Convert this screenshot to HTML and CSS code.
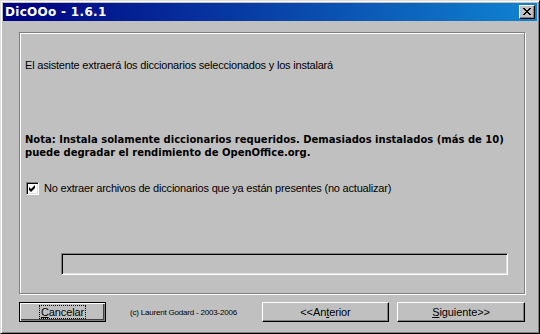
FILE: index.html
```html
<!DOCTYPE html>
<html>
<head>
<meta charset="utf-8">
<link rel="stylesheet" href="styles.css">
</head>
<body>
<div class="window">
  <div class="titlebar">
    <span class="title">DicOOo - 1.6.1</span>
    <span class="close"><svg width="8" height="7" viewBox="0 0 8 7"><path d="M0 0h2v1h1v1h2v-1h1v-1h2v1h-1v1h-1v1h-1v1h1v1h1v1h1v1h-2v-1h-1v-1h-2v1h-1v1h-2v-1h1v-1h1v-1h1v-1h-1v-1h-1v-1h-1z" fill="#000"/></svg></span>
  </div>
  <div class="content">
    <div class="frame">
      <p class="intro">El asistente extraerá los diccionarios seleccionados y los instalará</p>
      <p class="note">Nota: Instala solamente diccionarios requeridos. Demasiados instalados (más de 10)<br>puede degradar el rendimiento de OpenOffice.org.</p>
      <div class="check">
        <span class="box"><svg width="7" height="7" viewBox="0 0 7 7"><path d="M6 0v3l-4 4-2-2v-3l2 2z" fill="#000"/></svg></span>
        <span class="check-label">No extraer archivos de diccionarios que ya están presentes (no actualizar)</span>
      </div>
      <div class="progress"></div>
    </div>
    <div class="buttons">
      <span class="btn btn-default"><span class="focus"><u>C</u>ancelar</span></span>
      <span class="copy">(c) Laurent Godard - 2003-2006</span>
      <span class="btn btn-wide">&lt;&lt;An<u>t</u>erior</span>
      <span class="btn btn-wide"><u>S</u>iguiente&gt;&gt;</span>
    </div>
  </div>
</div>
</body>
</html>
```

FILE: styles.css
```css
* { box-sizing: border-box; }
html, body { margin: 0; padding: 0; background: #c0c0c0; }
body { font-family: "Liberation Sans", Arial, sans-serif; font-size: 11px; color: #000; }

.window {
  width: 540px;
  height: 334px;
  background: #c0c0c0;
  border-top: 1px solid #dfdfdf;
  border-left: 1px solid #dfdfdf;
  border-right: 1px solid #000;
  border-bottom: 1px solid #000;
  box-shadow: inset 1px 1px #fff, inset -1px -1px #808080;
  padding: 2px;
  display: flex;
  flex-direction: column;
}

.titlebar {
  height: 18px;
  background: linear-gradient(to right, #000080, #1084d0);
  display: flex;
  align-items: center;
  justify-content: space-between;
  padding: 0 2px 0 2px;
}
.title {
  color: #fff;
  font-family: "DejaVu Sans", Verdana, sans-serif;
  font-weight: bold;
  font-size: 12px;
  letter-spacing: 0.3px;
}
.close {
  width: 16px;
  height: 14px;
  background: #c0c0c0;
  border-top: 1px solid #fff;
  border-left: 1px solid #fff;
  border-right: 1px solid #000;
  border-bottom: 1px solid #000;
  box-shadow: inset -1px -1px #808080;
  display: flex;
  align-items: center;
  justify-content: center;
  padding-bottom: 1px;
}

.content {
  flex: 1;
  padding: 11px 12px 0 16px;
  display: flex;
  flex-direction: column;
}

.frame {
  height: 262px;
  border: 1px solid #808080;
  box-shadow: inset 1px 1px #fff, 1px 1px #fff;
  padding: 0 4px 0 5px;
  display: flex;
  flex-direction: column;
}

p { margin: 0; }
.intro { margin-top: 26px; line-height: 13px; letter-spacing: -0.2px; }
.note {
  margin-top: 61px;
  font-family: "DejaVu Sans", Verdana, sans-serif;
  font-weight: bold;
  font-size: 10px;
  line-height: 13px;
}
.check {
  margin-top: 23px;
  display: flex;
  align-items: center;
  gap: 5px;
  padding-left: 1px;
}
.box {
  width: 13px;
  height: 13px;
  background: #fff;
  border-top: 1px solid #808080;
  border-left: 1px solid #808080;
  border-right: 1px solid #fff;
  border-bottom: 1px solid #fff;
  box-shadow: inset 1px 1px #000, inset -1px -1px #dfdfdf;
  display: flex;
  align-items: center;
  justify-content: center;
}
.check-label { line-height: 13px; letter-spacing: -0.2px; }

.progress {
  margin: 58px 0 0 36px;
  width: 447px;
  height: 22px;
  border-top: 1px solid #808080;
  border-left: 1px solid #808080;
  border-right: 1px solid #fff;
  border-bottom: 1px solid #fff;
  box-shadow: inset 1px 1px #000, inset -1px -1px #dfdfdf;
}

.buttons {
  margin-top: 8px;
  display: flex;
  align-items: center;
}
.btn {
  height: 20px;
  display: flex;
  align-items: center;
  justify-content: center;
  background: #c0c0c0;
  border-top: 1px solid #fff;
  border-left: 1px solid #fff;
  border-right: 1px solid #000;
  border-bottom: 1px solid #000;
  box-shadow: inset -1px -1px #808080;
  letter-spacing: -0.1px;
}
.btn-default {
  width: 87px;
  border: 1px solid #000;
  box-shadow: inset 1px 1px #fff, inset -1px -1px #808080, inset -2px -2px #404040;
}
.focus {
  border: 1px dotted #000;
  padding: 0 1px;
  line-height: 12px;
}
.btn-wide { width: 127px; }
.btn-wide + .btn-wide { margin-left: 8px; width: 128px; }
.copy {
  font-size: 8px;
  letter-spacing: -0.2px;
  margin-left: 24px;
  margin-right: auto;
  color: #000;
}
u { text-decoration: underline; text-underline-offset: 1px; }
```
